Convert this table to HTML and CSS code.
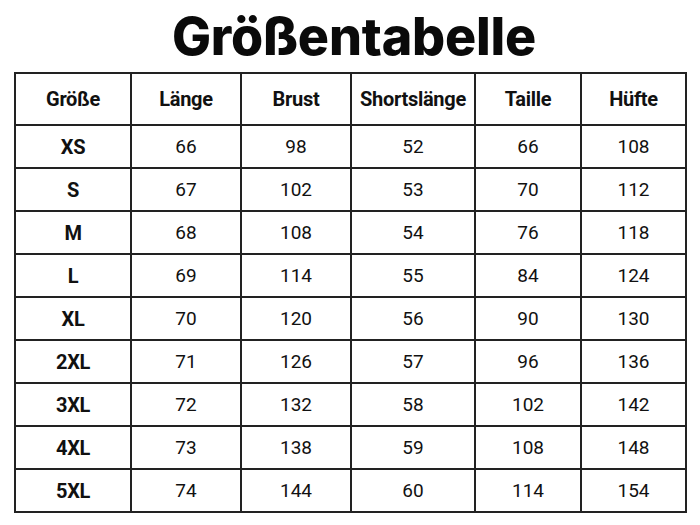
FILE: index.html
```html
<!DOCTYPE html>
<html lang="de">
<head>
<meta charset="utf-8">
<link rel="stylesheet" href="styles.css">
</head>
<body>
<h1 class="title">Größentabelle</h1>
<table class="sizes">
<colgroup>
<col class="c1"><col class="c2"><col class="c3"><col class="c4"><col class="c5"><col class="c6">
</colgroup>
<thead>
<tr><th>Größe</th><th>Länge</th><th>Brust</th><th>Shortslänge</th><th>Taille</th><th>Hüfte</th></tr>
</thead>
<tbody>
<tr><th>XS</th><td>66</td><td>98</td><td>52</td><td>66</td><td>108</td></tr>
<tr><th>S</th><td>67</td><td>102</td><td>53</td><td>70</td><td>112</td></tr>
<tr><th>M</th><td>68</td><td>108</td><td>54</td><td>76</td><td>118</td></tr>
<tr><th>L</th><td>69</td><td>114</td><td>55</td><td>84</td><td>124</td></tr>
<tr><th>XL</th><td>70</td><td>120</td><td>56</td><td>90</td><td>130</td></tr>
<tr><th>2XL</th><td>71</td><td>126</td><td>57</td><td>96</td><td>136</td></tr>
<tr><th>3XL</th><td>72</td><td>132</td><td>58</td><td>102</td><td>142</td></tr>
<tr><th>4XL</th><td>73</td><td>138</td><td>59</td><td>108</td><td>148</td></tr>
<tr><th>5XL</th><td>74</td><td>144</td><td>60</td><td>114</td><td>154</td></tr>
</tbody>
</table>
</body>
</html>
```
FILE: styles.css
```css
html, body {
  margin: 0;
  padding: 0;
  background: #ffffff;
  color: #111111;
}
body {
  width: 700px;
  height: 525px;
  overflow: hidden;
  font-family: Roboto, "Liberation Sans", sans-serif;
}
.title {
  margin: 0;
  height: 72px;
  line-height: 74px;
  text-align: center;
  font-family: Inter, Roboto, sans-serif;
  font-weight: 800;
  font-size: 52px;
  letter-spacing: -0.2px;
  color: #0a0a0a;
  padding-left: 8px;
}
.sizes {
  margin-left: 14px;
  border-collapse: collapse;
  table-layout: fixed;
  width: 671px;
}
.c1 { width: 116px; }
.c2 { width: 110px; }
.c3 { width: 110px; }
.c4 { width: 124px; }
.c5 { width: 106px; }
.c6 { width: 105px; }
.sizes th, .sizes td {
  border: 2px solid #222222;
  padding: 0;
  text-align: center;
  vertical-align: middle;
  font-size: 19px;
  height: 41px;
}
.sizes th {
  font-weight: 700;
  font-size: 20px;
  letter-spacing: -0.3px;
}
.sizes thead th {
  height: 50px;
}
.sizes td {
  font-weight: 400;
}
```
